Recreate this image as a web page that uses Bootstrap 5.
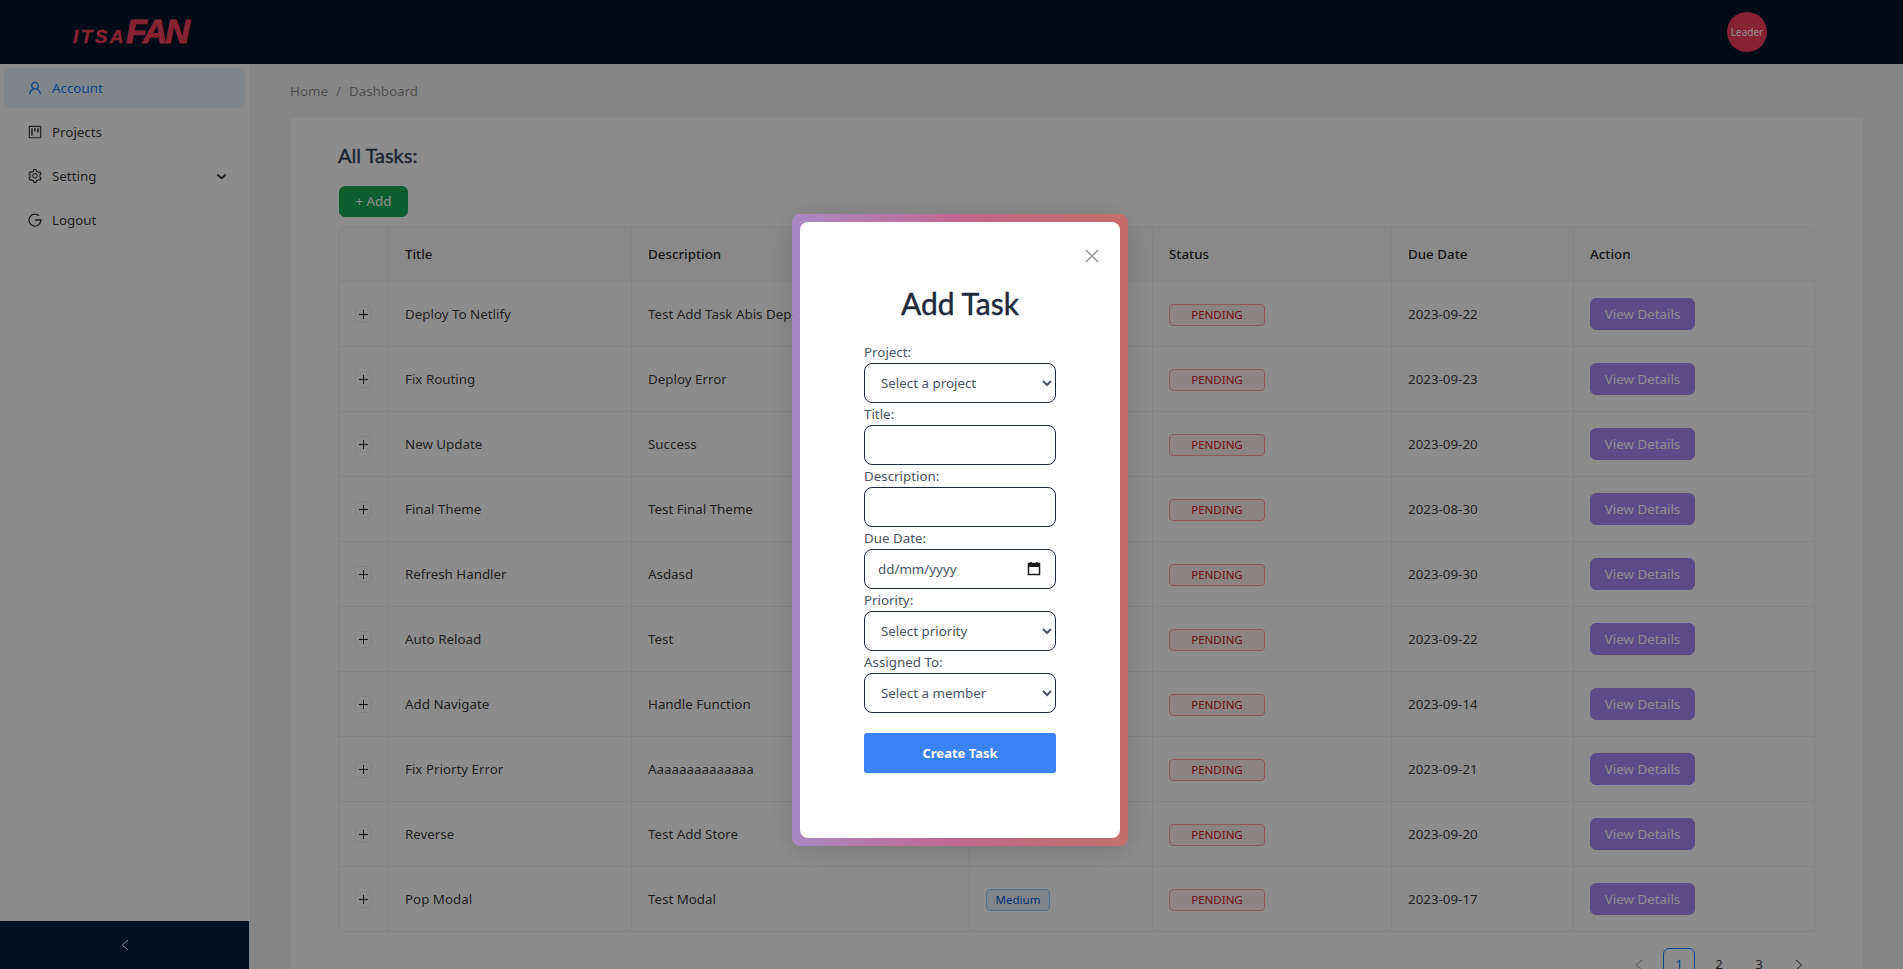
<!DOCTYPE html>
<html lang="en">

<head>
    <meta charset="UTF-8" />
    <meta name="viewport" content="width=device-width, initial-scale=1.0" />
    <title>ItsaFan Tasks</title>
    <link href="https://cdn.jsdelivr.net/npm/bootstrap@5.3.3/dist/css/bootstrap.min.css" rel="stylesheet" />
    <style>
        html, body {
            height: 100%;
            overflow: hidden;
        }

        body {
            background: #f5f5f5;
            font-family: "Noto Sans", "Open Sans", sans-serif;
            font-size: 13.35px;
            line-height: 22px;
            color: rgba(0, 0, 0, .8);
        }

        .top-bar {
            height: 64px;
            background: #001529;
            flex-shrink: 0;
        }

        .brand-logo {
            margin-left: 73px;
            margin-top: -3px;
            width: 120px;
            color: #f43f5e;
            font-family: "Liberation Sans", sans-serif;
            font-weight: 700;
            font-style: italic;
            line-height: 1;
            white-space: nowrap;
        }

        .brand-small {
            font-size: 19px;
            letter-spacing: 2.4px;
            -webkit-text-stroke: .3px #f43f5e;
        }

        .brand-big {
            font-size: 34px;
            letter-spacing: -2px;
            -webkit-text-stroke: 1px #f43f5e;
        }

        .leader-dot {
            width: 40px;
            height: 40px;
            margin-right: 136px;
            border-radius: 50%;
            background: #f43f5e;
            color: #fff;
            font-size: 10px;
        }

        .side-menu {
            width: 250px;
            flex-shrink: 0;
            background: #fff;
            border-right: 1px solid rgba(5, 5, 5, .06);
        }

        .side-item {
            height: 40px;
            margin: 0 4px 4px;
            padding-left: 23px;
            padding-right: 18px;
            border-radius: 8px;
            gap: 9px;
        }

        .side-item svg {
            width: 16px;
            height: 16px;
            flex-shrink: 0;
        }

        .side-item.is-active {
            background: #e6f4ff;
            color: #1677ff;
        }

        .side-trigger {
            height: 48px;
            background: #002140;
            color: #fff;
        }

        .content-area {
            padding: 0 40px;
            min-width: 0;
        }

        .crumbs {
            margin: 16px 0;
            color: rgba(0, 0, 0, .45);
        }

        .crumbs span + span {
            margin-left: 8px;
        }

        .task-panel {
            background: #fff;
            padding: 22px 48px;
        }

        .panel-title {
            font-family: Lato, sans-serif;
            font-size: 20px;
            font-weight: 400;
            -webkit-text-stroke: .35px #334155;
            line-height: 30px;
            margin: 0 0 16px;
            color: #334155;
        }

        .add-btn {
            display: block;
            width: 69px;
            height: 31px;
            padding: 0;
            margin: 0 0 9px 1px;
            font-size: 13.35px;
            background: #1aab57;
            border: 1px solid #1aab57;
            color: #fff;
            border-radius: 6px;
        }

        .task-grid {
            width: 1477px;
            table-layout: fixed;
            border-collapse: separate;
            border-spacing: 0;
            margin: 0;
            border-top: 1px solid #f0f0f0;
            border-left: 1px solid #f0f0f0;
            border-radius: 8px;
        }

        .task-grid.table > :not(caption) > * > * {
            padding: 16px;
            border-width: 0 1px 1px 0;
            border-style: solid;
            border-color: #f0f0f0;
            color: rgba(0, 0, 0, .8);
            box-shadow: none;
            background: transparent;
            vertical-align: middle;
            line-height: 22px;
            white-space: nowrap;
            overflow: hidden;
        }

        .task-grid.table > thead > tr > th {
            background: #fafafa;
            font-weight: 500;
            color: rgba(0, 0, 0, .88);
        }

        .plus-box {
            display: flex;
            align-items: center;
            justify-content: center;
            width: 17px;
            height: 17px;
            margin: 0 auto;
            border: 1px solid #f0f0f0;
            border-radius: 4px;
            background: #fff;
        }

        .tag-item {
            display: inline-block;
            height: 22px;
            line-height: 20px;
            padding: 0 7px;
            font-size: 11.5px;
            border-radius: 4px;
            border: 1px solid;
            vertical-align: middle;
        }

        .tag-blue {
            width: 64px;
            text-align: center;
            padding: 0;
            background: #e6f4ff;
            border-color: #91caff;
            color: #0958d9;
        }

        .tag-red {
            width: 96px;
            text-align: center;
            background: #fff1f0;
            border-color: #ffa39e;
            color: #cf1322;
        }

        .view-btn {
            display: block;
            width: 105px;
            height: 32px;
            padding: 0;
            font-size: 13.35px;
            background: #a78bfa;
            border: 1px solid #a78bfa;
            color: #fff;
            border-radius: 6px;
        }

        .pager {
            margin-top: 16px;
            gap: 8px;
        }

        .pager-item {
            width: 32px;
            height: 32px;
            line-height: 30px;
            text-align: center;
            border: 1px solid transparent;
            border-radius: 6px;
        }

        .pager-item.is-current {
            border-color: #1677ff;
            color: #1677ff;
        }

        .dim-layer {
            position: fixed;
            inset: 0;
            background: rgba(0, 0, 0, .45);
            z-index: 1000;
        }

        .task-dialog {
            position: fixed;
            top: 214px;
            left: 792px;
            width: 336px;
            height: 632px;
            padding: 8px;
            border-radius: 8px;
            background: linear-gradient(90deg, rgba(172, 136, 200, .93), rgba(198, 100, 140, .93) 50%, rgba(200, 108, 104, .93));
            box-shadow: 0 4px 30px rgba(0, 0, 0, .18);
            z-index: 1001;
        }

        .dialog-body {
            position: relative;
            height: 100%;
            background: #fff;
            border-radius: 8px;
            padding: 63px 64px 0;
        }

        .close-x {
            position: absolute;
            top: 27px;
            right: 21px;
            width: 14px;
            height: 14px;
            padding: 0;
            border: 0;
            background: none;
            display: flex;
        }

        .dialog-title {
            font-family: Lato, sans-serif;
            font-size: 30px;
            font-weight: 400;
            -webkit-text-stroke: .45px #1e293b;
            line-height: 36px;
            color: #1e293b;
            text-align: center;
            margin: 0 0 20px;
        }

        .field-label {
            display: block;
            margin: 0;
            height: 22px;
            line-height: 22px;
            color: #4b5563;
        }

        .field-box {
            display: block;
            width: 192px;
            height: 40px;
            border: 1px solid #1e293b;
            border-radius: 8px;
            background: #fff;
            font-size: 13.35px;
            color: #4b5563;
            padding: 0 13px;
            box-shadow: none;
        }

        .field-box::placeholder {
            color: #4b5563;
            opacity: 1;
        }

        select.field-box {
            padding: 0 0 0 12px;
        }

        .date-wrap {
            position: relative;
        }

        .date-icon {
            position: absolute;
            top: 12px;
            right: 15px;
        }

        .create-btn {
            display: block;
            width: 192px;
            height: 40px;
            margin-top: 20px;
            padding: 0;
            font-size: 13px;
            font-weight: 700;
            background: #3b82f6;
            border: 0;
            border-radius: 3px;
            color: #fff;
            box-shadow: 0 2px 0 rgba(5, 145, 255, .1);
        }
    </style>
</head>

<body class="d-flex flex-column">
    <header class="top-bar d-flex align-items-center justify-content-between">
        <div class="brand-logo"><span class="brand-small">ITSA</span><span class="brand-big">FAN</span></div>
        <div class="leader-dot d-flex align-items-center justify-content-center">Leader</div>
    </header>

    <div class="d-flex flex-grow-1" style="min-height:0">
        <aside class="side-menu d-flex flex-column">
            <nav class="flex-grow-1 pt-1">
                <div class="side-item is-active d-flex align-items-center">
                    <svg viewBox="0 0 1024 1024" fill="currentColor"><path d="M858.5 763.6a374 374 0 0 0-80.6-119.5 375.63 375.63 0 0 0-119.5-80.6c-.4-.2-.8-.3-1.2-.5C719.5 518 760 444.7 760 362c0-137-111-248-248-248S264 225 264 362c0 82.7 40.5 156 102.8 201.1-.4.2-.8.3-1.2.5-44.8 18.9-85 46-119.5 80.6a375.63 375.63 0 0 0-80.6 119.5A371.7 371.7 0 0 0 136 901.8a8 8 0 0 0 8 7.8h60c4.4 0 7.9-3.5 8-7.8 2-77.2 33-149.5 87.8-204.3 56.7-56.7 132-87.9 212.2-87.9s155.5 31.2 212.2 87.9C779 752.3 810 824.6 812 901.8c.1 4.4 3.6 7.8 8 7.8h60a8 8 0 0 0 8-8.2c-1-47.8-10.9-94.3-29.5-138.2zM512 534c-45.9 0-89.1-17.9-121.6-50.4S340 407.9 340 362c0-45.9 17.9-89.1 50.4-121.6S466.1 190 512 190s89.1 17.9 121.6 50.4S684 316.1 684 362c0 45.9-17.9 89.1-50.4 121.6S557.9 534 512 534z"/></svg>
                    <span>Account</span>
                </div>
                <div class="side-item d-flex align-items-center">
                    <svg viewBox="0 0 1024 1024" fill="currentColor"><path d="M280 752h80c4.4 0 8-3.6 8-8V280c0-4.4-3.6-8-8-8h-80c-4.4 0-8 3.6-8 8v464c0 4.4 3.6 8 8 8zm192-280h80c4.4 0 8-3.6 8-8V280c0-4.4-3.6-8-8-8h-80c-4.4 0-8 3.6-8 8v184c0 4.4 3.6 8 8 8zm192 72h80c4.4 0 8-3.6 8-8V280c0-4.4-3.6-8-8-8h-80c-4.4 0-8 3.6-8 8v256c0 4.4 3.6 8 8 8zm216-432H144c-17.7 0-32 14.3-32 32v736c0 17.7 14.3 32 32 32h736c17.7 0 32-14.3 32-32V144c0-17.7-14.3-32-32-32zm-40 728H184V184h656v656z"/></svg>
                    <span>Projects</span>
                </div>
                <div class="side-item d-flex align-items-center">
                    <svg viewBox="0 0 1024 1024" fill="currentColor"><path d="M924.8 625.7l-65.5-56c3.1-19 4.7-38.4 4.7-57.8s-1.6-38.8-4.7-57.8l65.5-56a32.03 32.03 0 0 0 9.3-35.2l-.9-2.6a443.74 443.74 0 0 0-79.7-137.9l-1.8-2.1a32.12 32.12 0 0 0-35.1-9.5l-81.3 28.9c-30-24.6-63.5-44-99.7-57.6l-15.7-85a32.05 32.05 0 0 0-25.8-25.7l-2.7-.5c-52.1-9.4-106.9-9.4-159 0l-2.7.5a32.05 32.05 0 0 0-25.8 25.7l-15.8 85.4a351.86 351.86 0 0 0-99 57.4l-81.9-29.1a32 32 0 0 0-35.1 9.5l-1.8 2.1a446.02 446.02 0 0 0-79.7 137.9l-.9 2.6c-4.5 12.5-.8 26.5 9.3 35.2l66.3 56.6c-3.1 18.8-4.6 38-4.6 57.1 0 19.2 1.5 38.4 4.6 57.1L99 625.5a32.03 32.03 0 0 0-9.3 35.2l.9 2.6c18.1 50.4 44.9 96.9 79.7 137.9l1.8 2.1a32.12 32.12 0 0 0 35.1 9.5l81.9-29.1c29.8 24.5 63.1 43.9 99 57.4l15.8 85.4a32.05 32.05 0 0 0 25.8 25.7l2.7.5a449.4 449.4 0 0 0 159 0l2.7-.5a32.05 32.05 0 0 0 25.8-25.7l15.7-85a350 350 0 0 0 99.7-57.6l81.3 28.9a32 32 0 0 0 35.1-9.5l1.8-2.1c34.8-41.1 61.6-87.5 79.7-137.9l.9-2.6c4.5-12.3.8-26.3-9.3-35zM788.3 465.9c2.5 15.1 3.8 30.6 3.8 46.1s-1.3 31-3.8 46.1l-6.6 40.1 74.7 63.9a370.03 370.03 0 0 1-42.6 73.6L721 702.8l-31.4 25.8c-23.9 19.6-50.5 35-79.3 45.8l-38.1 14.3-17.9 97a377.5 377.5 0 0 1-85 0l-17.9-97.2-37.8-14.5c-28.5-10.8-55-26.2-78.7-45.7l-31.4-25.9-93.4 33.2c-17-22.9-31.2-47.6-42.6-73.6l75.5-64.5-6.5-40c-2.4-14.9-3.7-30.3-3.7-45.5 0-15.3 1.2-30.6 3.7-45.5l6.5-40-75.5-64.5c11.3-26.1 25.6-50.7 42.6-73.6l93.4 33.2 31.4-25.9c23.7-19.5 50.2-34.9 78.7-45.7l37.9-14.3 17.9-97.2c28.1-3.2 56.8-3.2 85 0l17.9 97 38.1 14.3c28.7 10.8 55.4 26.2 79.3 45.8l31.4 25.8 92.8-32.9c17 22.9 31.2 47.6 42.6 73.6L781.8 426l6.5 39.9zM512 326c-97.2 0-176 78.8-176 176s78.8 176 176 176 176-78.8 176-176-78.8-176-176-176zm79.2 255.2A111.6 111.6 0 0 1 512 614c-29.9 0-58-11.7-79.2-32.8A111.6 111.6 0 0 1 400 502c0-29.9 11.7-58 32.8-79.2C454 401.6 482.1 390 512 390c29.9 0 58 11.6 79.2 32.8A111.6 111.6 0 0 1 624 502c0 29.9-11.7 58-32.8 79.2z"/></svg>
                    <span class="flex-grow-1">Setting</span>
                    <svg viewBox="0 0 12 12" fill="none" stroke="currentColor" stroke-width="2" style="width:11px;height:11px"><path d="M1.5 3.8 6 8l4.500-4.200"/></svg>
                </div>
                <div class="side-item d-flex align-items-center">
                    <svg viewBox="0 0 16 16" fill="none" stroke="currentColor" stroke-width="1.300"><path d="M12.200 3.800A6 6 0 1 0 14 8H8"/></svg>
                    <span>Logout</span>
                </div>
            </nav>
            <div class="side-trigger d-flex align-items-center justify-content-center">
                <svg viewBox="0 0 12 12" width="12" height="12" fill="none" stroke="currentColor" stroke-width="1"><path d="M9 1 3.200 6 9 11"/></svg>
            </div>
        </aside>

        <main class="content-area flex-grow-1">
            <div class="crumbs"><span>Home</span><span>/</span><span>Dashboard</span></div>
            <section class="task-panel">
                <h2 class="panel-title">All Tasks:</h2>
                <button class="btn add-btn">+ Add</button>
                <table class="table table-bordered task-grid">
                    <colgroup>
                        <col style="width:50px"><col style="width:243px"><col style="width:338px"><col style="width:183px"><col style="width:239px"><col style="width:182px"><col style="width:241px">
                    </colgroup>
                    <thead>
                        <tr><th></th><th>Title</th><th>Description</th><th>Priority</th><th>Status</th><th>Due Date</th><th>Action</th></tr>
                    </thead>
                    <tbody id="taskRows"></tbody>
                </table>
                <div class="pager d-flex justify-content-end align-items-center">
                    <span class="pager-item opacity-50"><svg viewBox="0 0 12 12" width="12" height="12" fill="none" stroke="currentColor" stroke-width="1"><path d="M9 1 3.200 6 9 11"/></svg></span>
                    <span class="pager-item is-current">1</span>
                    <span class="pager-item">2</span>
                    <span class="pager-item">3</span>
                    <span class="pager-item"><svg viewBox="0 0 12 12" width="12" height="12" fill="none" stroke="currentColor" stroke-width="1"><path d="M3 1 8.800 6 3 11"/></svg></span>
                </div>
            </section>
        </main>
    </div>

    <div class="dim-layer"></div>

    <div class="task-dialog">
        <form class="dialog-body">
            <button type="button" class="close-x" aria-label="Close">
                <svg viewBox="0 0 14 14" width="14" height="14" fill="none" stroke="#8c8c8c" stroke-width="1.300"><path d="M1 1 13 13M13 1 1 13"/></svg>
            </button>
            <h2 class="dialog-title">Add Task</h2>
            <label class="field-label">Project:</label>
            <select class="field-box"><option>Select a project</option></select>
            <label class="field-label">Title:</label>
            <input type="text" class="field-box">
            <label class="field-label">Description:</label>
            <input type="text" class="field-box">
            <label class="field-label">Due Date:</label>
            <div class="date-wrap">
                <input type="text" class="field-box" placeholder="dd/mm/yyyy">
                <svg class="date-icon" viewBox="0 0 14 16" width="14" height="16" fill="none" stroke="#1a1a1a"><rect x="1.500" y="2.500" width="11" height="11" stroke-width="1.500"/><path d="M1.500 4.500h11" stroke-width="3"/><path d="M4 1v2M10 1v2" stroke-width="1.500"/></svg>
            </div>
            <label class="field-label">Priority:</label>
            <select class="field-box"><option>Select priority</option></select>
            <label class="field-label">Assigned To:</label>
            <select class="field-box"><option>Select a member</option></select>
            <button type="button" class="create-btn">Create Task</button>
        </form>
    </div>

    <script src="https://cdn.jsdelivr.net/npm/bootstrap@5.3.3/dist/js/bootstrap.bundle.min.js"></script>
    <script>
        const tasks = [
            ['Deploy To Netlify', 'Test Add Task Abis Deploy', '2023-09-22'],
            ['Fix Routing', 'Deploy Error', '2023-09-23'],
            ['New Update', 'Success', '2023-09-20'],
            ['Final Theme', 'Test Final Theme', '2023-08-30'],
            ['Refresh Handler', 'Asdasd', '2023-09-30'],
            ['Auto Reload', 'Test', '2023-09-22'],
            ['Add Navigate', 'Handle Function', '2023-09-14'],
            ['Fix Priorty Error', 'Aaaaaaaaaaaaaa', '2023-09-21'],
            ['Reverse', 'Test Add Store', '2023-09-20'],
            ['Pop Modal', 'Test Modal', '2023-09-17']
        ];

        document.getElementById('taskRows').innerHTML = tasks.map(t => `
            <tr>
                <td><span class="plus-box"><svg viewBox="0 0 11 11" width="11" height="11" stroke="#262626" stroke-width="1"><path d="M1 5.500h9M5.500 1v9"/></svg></span></td>
                <td>${t[0]}</td>
                <td>${t[1]}</td>
                <td><span class="tag-item tag-blue">Medium</span></td>
                <td><span class="tag-item tag-red">PENDING</span></td>
                <td>${t[2]}</td>
                <td><button class="btn view-btn">View Details</button></td>
            </tr>`).join('');
    </script>
</body>

</html>
